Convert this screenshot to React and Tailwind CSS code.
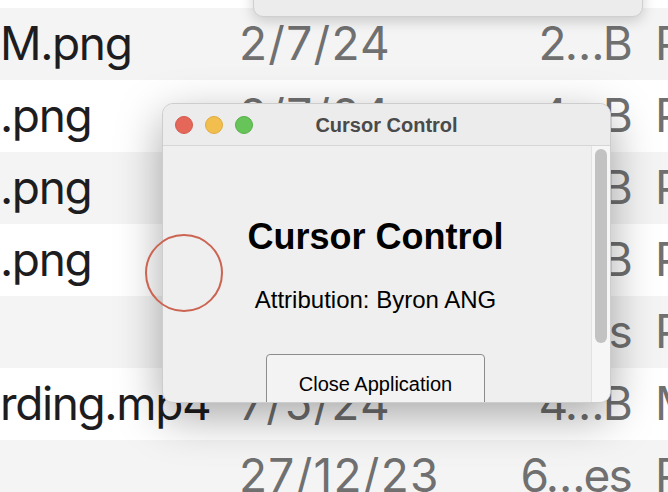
import React from "react";

const G = "bg-[#f4f4f4]";
const W = "bg-white";
const rows = [
  { bg: G, name: "M.png", date: "2/7/24", size: "2…B", kind: "P" },
  { bg: W, name: ".png", date: "2/7/24", size: "4…B", kind: "P" },
  { bg: G, name: ".png", date: "2/7/24", size: "1…B", kind: "P" },
  { bg: W, name: ".png", date: "2/7/24", size: "2…B", kind: "P" },
  { bg: G, name: "", date: "3/7/24", size: "9…es", kind: "P" },
  { bg: W, name: "rding.mp4", date: "7/5/24", size: "4…B", kind: "M" },
  { bg: G, name: "", date: "27/12/23", size: "6…es", kind: "P" },
];

function Row({ r }) {
  return (
    <div
      className={`${r.bg} h-[72px] shrink-0 flex items-center whitespace-nowrap text-[46px] leading-[1.3]`}
      style={{ fontFamily: "Inter, 'Noto Sans', sans-serif" }}
    >
      <div className="w-[240px] shrink-0 overflow-hidden text-[#1d1d1f] tracking-[-0.03em] -ml-[1px] pl-[1px]">
        {r.name || "\u00a0"}
      </div>
      <div className="w-[300px] shrink-0 text-[#707070] tracking-[0.028em]">{r.date}</div>
      <div className="w-[92px] shrink-0 flex justify-end text-[#707070] tracking-[-0.04em]">
        <span>{r.size}</span>
      </div>
      <div className="ml-[24px] text-[#707070]">{r.kind}</div>
    </div>
  );
}

export default function App() {
  return (
    <div className="relative w-[668px] h-[492px] overflow-hidden bg-white">
      <div className="flex flex-col">
        <div className="h-[8px] bg-white shrink-0" />
        {rows.map((r, i) => (
          <Row key={i} r={r} />
        ))}
      </div>

      {/* top popup window edge */}
      <div className="absolute left-[253px] top-[-30px] w-[390px] h-[47px] rounded-[10px] bg-[#ececec] border border-[#cfcfcf] shadow-[0_4px_14px_rgba(0,0,0,0.18)]" />

      {/* Cursor Control window */}
      <div
        className="absolute left-[162px] top-[103px] w-[449px] h-[300px] rounded-[11px] overflow-hidden flex flex-col bg-[#efefef] border border-[#cdcdcd] shadow-[0_14px_45px_rgba(0,0,0,0.34)]"
        style={{ fontFamily: "'Liberation Sans', Arial, sans-serif" }}
      >
        <div className="h-[42px] shrink-0 relative flex items-center border-b border-[#d6d6d6] bg-[#ececec]">
          <div className="flex items-center gap-[12px] pl-[12px]">
            <div className="w-[18px] h-[18px] rounded-full bg-[#e5675a] border border-[#d55a4d]" />
            <div className="w-[18px] h-[18px] rounded-full bg-[#f2bf4f] border border-[#dfab3e]" />
            <div className="w-[18px] h-[18px] rounded-full bg-[#66c458] border border-[#55b047]" />
          </div>
          <div className="absolute inset-0 flex items-center justify-center text-[20px] font-bold text-[#4a4a4a]">
            Cursor Control
          </div>
        </div>
        <div className="flex-1 flex min-h-0">
          <div className="flex-1 flex flex-col items-center pt-[73px] pr-[3px] text-black">
            <div className="text-[36px] leading-none font-bold">Cursor Control</div>
            <div className="mt-[33px] text-[24px] leading-none">Attribution: Byron ANG</div>
            <div className="mt-[42px] w-[219px] shrink-0 border border-[#8c8c8c] rounded-[4px] bg-[#f3f3f3] pt-[19px] pb-[20px] text-center text-[20px] leading-none">
              Close Application
            </div>
          </div>
          <div className="w-[19px] shrink-0 border-l border-[#e2e2e2] bg-[#f6f6f6] pt-[3px] pl-[3px]">
            <div className="w-[12px] h-[194px] rounded-full bg-[#c2c2c2]" />
          </div>
        </div>
      </div>

      {/* cursor highlight circle */}
      <div className="absolute left-[145px] top-[234px] w-[78px] h-[78px] rounded-full border-[2px] border-[#cc6452]" />
    </div>
  );
}
